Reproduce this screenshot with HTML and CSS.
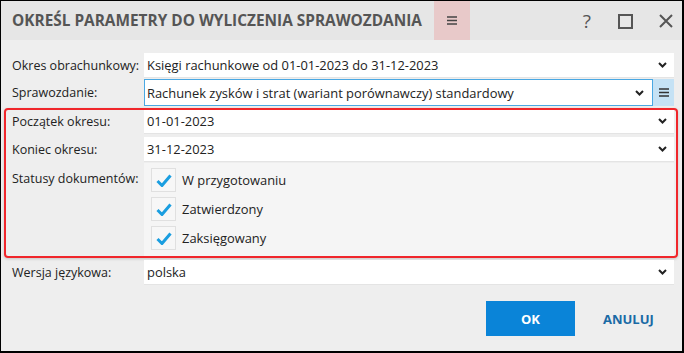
FILE: index.html
```html
<!DOCTYPE html>
<html lang="pl">
<head>
<meta charset="utf-8">
<title>Określ parametry</title>
<link rel="stylesheet" href="styles.css">
</head>
<body>
<div class="dialog">
  <header class="titlebar">
    <h1 class="title">OKREŚL PARAMETRY DO WYLICZENIA SPRAWOZDANIA</h1>
    <button class="menu-btn" type="button" aria-label="Menu">
      <svg width="10" height="9" viewBox="0 0 10 9"><path d="M0 1h10M0 4.5h10M0 8h10" stroke="#444" stroke-width="1.3"/></svg>
    </button>
    <div class="win-ctrls">
      <span class="help">?</span>
      <svg class="ctrl-max" width="15" height="15" viewBox="0 0 15 15"><rect x="1" y="1" width="13" height="13" fill="none" stroke="#555" stroke-width="2"/></svg>
      <svg class="ctrl-close" width="14" height="14" viewBox="0 0 14 14"><path d="M1 1l12 12M13 1L1 13" stroke="#555" stroke-width="2"/></svg>
    </div>
  </header>
  <main class="form">
    <div class="row r1">
      <label class="lbl">Okres obrachunkowy:</label>
      <div class="field"><span class="val">Księgi rachunkowe od 01-01-2023 do 31-12-2023</span><svg class="chev" width="9" height="6" viewBox="0 0 9 6"><path d="M1 1l3.5 3.5L8 1" fill="none" stroke="#222" stroke-width="2"/></svg></div>
    </div>
    <div class="row r2">
      <label class="lbl">Sprawozdanie:</label>
      <div class="combo">
        <div class="field active"><span class="val">Rachunek zysków i strat (wariant porównawczy) standardowy</span><svg class="chev" width="9" height="6" viewBox="0 0 9 6"><path d="M1 1l3.5 3.5L8 1" fill="none" stroke="#222" stroke-width="2"/></svg></div>
        <button class="side-btn" type="button" aria-label="Lista"><svg width="10" height="9" viewBox="0 0 10 9"><path d="M0 1h10M0 4.5h10M0 8h10" stroke="#333" stroke-width="1.3"/></svg></button>
      </div>
    </div>
    <div class="group">
      <div class="row">
        <label class="lbl">Początek okresu:</label>
        <div class="field"><span class="val">01-01-2023</span><svg class="chev" width="9" height="6" viewBox="0 0 9 6"><path d="M1 1l3.5 3.5L8 1" fill="none" stroke="#222" stroke-width="2"/></svg></div>
      </div>
      <div class="row r4">
        <label class="lbl">Koniec okresu:</label>
        <div class="field"><span class="val">31-12-2023</span><svg class="chev" width="9" height="6" viewBox="0 0 9 6"><path d="M1 1l3.5 3.5L8 1" fill="none" stroke="#222" stroke-width="2"/></svg></div>
      </div>
      <div class="row status-row">
        <label class="lbl">Statusy dokumentów:</label>
        <div class="checks">
          <div class="check"><span class="box"><svg width="16" height="13" viewBox="0 0 16 13"><path d="M1.5 7l4.5 4.5L14.5 1.5" fill="none" stroke="#1a9ee0" stroke-width="3"/></svg></span><span>W przygotowaniu</span></div>
          <div class="check"><span class="box"><svg width="16" height="13" viewBox="0 0 16 13"><path d="M1.5 7l4.5 4.5L14.5 1.5" fill="none" stroke="#1a9ee0" stroke-width="3"/></svg></span><span>Zatwierdzony</span></div>
          <div class="check"><span class="box"><svg width="16" height="13" viewBox="0 0 16 13"><path d="M1.5 7l4.5 4.5L14.5 1.5" fill="none" stroke="#1a9ee0" stroke-width="3"/></svg></span><span>Zaksięgowany</span></div>
        </div>
      </div>
    </div>
    <div class="row r-last">
      <label class="lbl">Wersja językowa:</label>
      <div class="field"><span class="val">polska</span><svg class="chev" width="9" height="6" viewBox="0 0 9 6"><path d="M1 1l3.5 3.5L8 1" fill="none" stroke="#222" stroke-width="2"/></svg></div>
    </div>
  </main>
  <footer class="actions">
    <button class="ok" type="button">OK</button>
    <button class="cancel" type="button">ANULUJ</button>
  </footer>
</div>
</body>
</html>
```
FILE: styles.css
```css
* { box-sizing: border-box; }
html, body { margin: 0; padding: 0; }
body {
  width: 684px;
  height: 353px;
  font-family: "Open Sans", "Noto Sans", sans-serif;
  color: #222;
  background: #fff;
}
.dialog {
  width: 684px;
  height: 353px;
  border: 1px solid #000;
  border-right-width: 2px;
  border-bottom-width: 2px;
  background: #eeeeee;
  display: flex;
  flex-direction: column;
}
.titlebar {
  height: 39px;
  flex: none;
  background: #e6e6e6;
  display: flex;
  align-items: stretch;
  padding-left: 11px;
}
.title {
  margin: 0;
  font-size: 15.4px;
  font-weight: 700;
  color: #555;
  align-self: center;
  white-space: nowrap;
}
.menu-btn {
  margin-left: 12px;
  width: 36px;
  border: 0;
  padding: 0;
  background: #e8c9c9;
  display: flex;
  align-items: center;
  justify-content: center;
}
.win-ctrls {
  margin-left: auto;
  display: flex;
  align-items: center;
  padding-right: 9px;
  padding-top: 1px;
}
.help {
  font-size: 19px;
  color: #555;
  line-height: 1;
}
.ctrl-max { margin-left: 27px; }
.ctrl-close { margin-left: 26px; }
.form {
  padding: 13px 0 0 3px;
  width: 677px;
  display: flex;
  flex-direction: column;
}
.row {
  display: grid;
  grid-template-columns: 140px 1fr;
  align-items: stretch;
  padding-right: 4px;
}
.r2 { margin-top: 1px; }
.r4 { margin-top: 3px; }
.lbl {
  font-size: 12.5px;
  padding-left: 8px;
  display: flex;
  align-items: center;
  color: #222;
  white-space: nowrap;
}
.field {
  background: #fff;
  display: flex;
  align-items: center;
  padding: 0 7px 0 3px;
  height: 25px;
  font-size: 12.9px;
  border-bottom: 1px solid #e4e4e4;
}
.val { flex: 1; white-space: nowrap; overflow: hidden; }
.chev { flex: none; }
.combo { display: flex; }
.combo .field { flex: 1; }
.field.active {
  border: 1px solid #4aa8e3;
  padding-left: 2px;
  height: 27px;
  padding-right: 8px;
}
.side-btn {
  width: 21px;
  border: 0;
  padding: 0;
  background: #c5e2f5;
  display: flex;
  align-items: center;
  justify-content: center;
}
.group {
  margin-top: 2px;
  border-radius: 4px;
  outline: 2px solid #f0262b;
  outline-offset: -2px;
  padding: 1px 0 2px;
  display: flex;
  flex-direction: column;
  box-shadow: 0 1px 3px rgba(0,0,0,0.18);
}
.status-row { margin-top: 1px; }
.status-row .lbl { align-items: flex-start; padding-top: 7px; }
.checks {
  background: #f5f5f5;
  padding: 5px 7px 6px;
  display: flex;
  flex-direction: column;
  gap: 5px;
}
.check {
  display: flex;
  align-items: center;
  gap: 6px;
  font-size: 12.9px;
}
.box {
  width: 25px;
  height: 24px;
  border: 1px solid #e0e0e0;
  background: #f7f7f7;
  display: flex;
  align-items: center;
  justify-content: center;
}
.r-last { margin-top: 2px; }
.actions {
  margin-top: auto;
  display: flex;
  align-items: center;
  padding: 0 0 15px 485px;
}
.ok {
  width: 89px;
  height: 35px;
  border: 0;
  background: #0a84d8;
  color: #fff;
  font-family: "Open Sans", sans-serif;
  font-weight: 700;
  font-size: 13px;
}
.cancel {
  margin-left: 28px;
  border: 0;
  background: none;
  padding: 0;
  color: #1a6aa5;
  font-family: "Open Sans", sans-serif;
  font-weight: 700;
  font-size: 13px;
}
```
